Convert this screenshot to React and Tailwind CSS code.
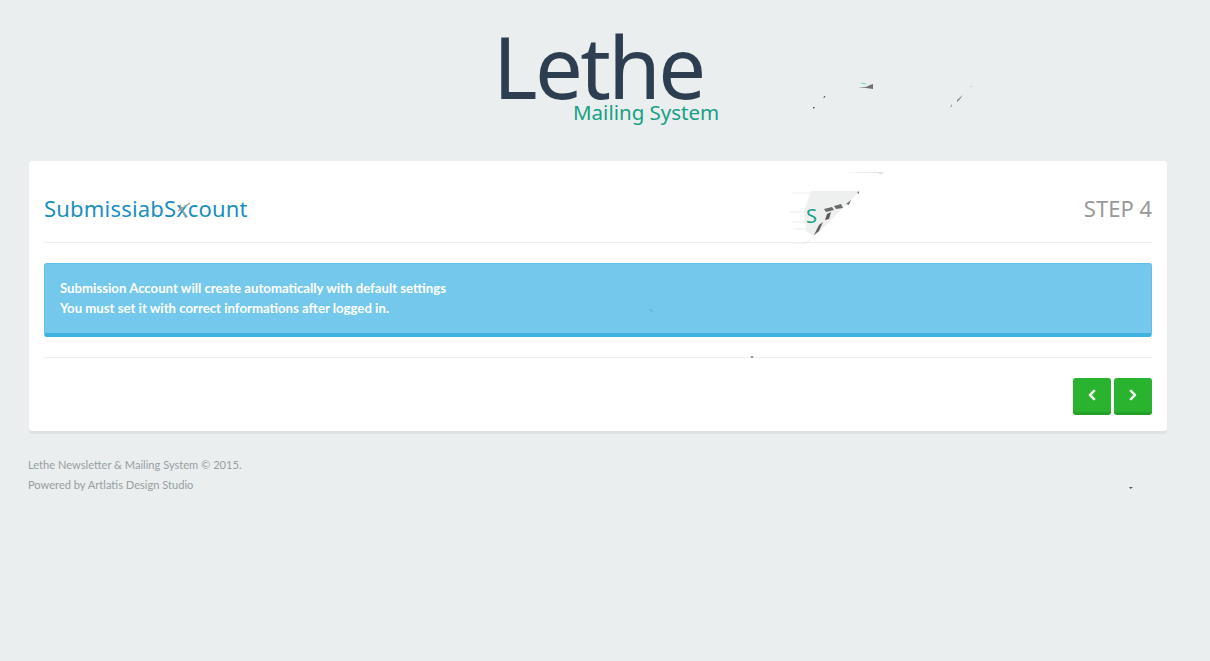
import { FaChevronLeft, FaChevronRight } from 'react-icons/fa';

const BODY_FONT = "font-['Lato','Noto_Sans',sans-serif]";
const HEAD_FONT = "font-['Noto_Sans',sans-serif]";

function Glitches() {
  return (
    <>
      <svg className="absolute left-0 top-0 pointer-events-none" width="1210" height="661" viewBox="0 0 1210 661" fill="none">
        <path d="M858 87 L866 87 L870 85 L873 84 L873 89 L866 88 Z" fill="#6f7273" />
        <path d="M861 83 L866 84" stroke="#7fd0c4" />
        <path d="M824 96 L825.5 96.5 L823.5 98.5 Z M813 107 L815 107 L813.5 109 Z" fill="#444444" />
        <path d="M957 100 L963 95 L960 99 L957 102 Z M950 108 L952 104 L952 106 Z" fill="#7c7f80" />
        <path d="M970 87 L972 86" stroke="#c9cccd" />
        <path d="M838 172 H878 L884 172 L881 175 L878 173 Z" fill="#e2e2e2" />
        <path d="M811 191 H858 L861 190 L826 225 L815 236 L806 232 L804 212 Z" fill="#eef0f0" />
        <path d="M792 193 H811 M790 212 H804 M792 222 H805 M795 229 H806 M792 243 H806 L809 240" stroke="#ececec" />
        <path d="M824 209 L832 207 L834 210 L826 212 Z M834 206 L841 204 L843 208 L836 209 Z" fill="#6b6b6b" />
        <path d="M827 214 L831 212 L829 219 L825 220 Z" fill="#5a5a5a" />
        <path d="M846 204 L851 200 L849 205 Z M857 193 L859 191 L859 194 Z" fill="#777777" />
        <path d="M814 235 L819 225 L823 222 L819 231 Z" fill="#5f5f5f" />
        <path d="M178 211 L190 203 M180 205 L186 218" stroke="#9aa5aa" strokeWidth="1.5" />
        <path d="M750 356.5 H754 L752 358 Z M1129 487 H1133 L1130.5 489 Z" fill="#555555" />
        <path d="M650 309.5 L652 311.5" stroke="#5a8ea8" />
      </svg>
      <span className={`absolute left-[806px] top-[202px] text-[20px] leading-[28px] text-[#16a085] ${HEAD_FONT}`}>S</span>
    </>
  );
}

export default function App() {
  return (
    <div className={`relative min-h-[661px] bg-[#eaeeef] ${BODY_FONT}`}>
      <div className="flex h-[161px] justify-center">
        <div className="relative mt-[16px] ml-[-18px] w-[206px] h-[110px]">
          <h1 className={`text-[85px] leading-[100px] tracking-[-2.6px] text-[#2c3e50] ${HEAD_FONT}`}>Lethe</h1>
          <span className={`absolute left-[80px] top-[83px] whitespace-nowrap text-[20.5px] leading-[26px] text-[#16a085] ${HEAD_FONT}`}>Mailing System</span>
        </div>
      </div>

      <div className="ml-[29px] w-[1138px] rounded-[3px] bg-white px-[15px] pb-[16px] shadow-[0_3px_0_#e0e1e1]">
        <div className="flex h-[82px] items-end justify-between border-b border-[#eeeeee] pb-[18px]">
          <h2 className={`mb-[1px] text-[22px] leading-[30px] tracking-[0.2px] text-[#1a8fc0] ${HEAD_FONT}`}>SubmissiabSxcount</h2>
          <span className={`mb-[1px] text-[22px] leading-[30px] text-[#999999] ${HEAD_FONT}`}>STEP 4</span>
        </div>

        <div className="mt-[20px] rounded-[3px] border-l border-t border-r border-[#5fbfe8] border-b-[4px] border-b-[#3fb3e0] bg-[#73c8ec] px-[15px] pb-[15px] pt-[14px] text-[13.2px] font-bold leading-[20px] text-white">
          <p>Submission Account will create automatically with default settings</p>
          <p>You must set it with correct informations after logged in.</p>
        </div>

        <div className="mt-[20px] flex justify-end gap-[3px] border-t border-[#eeeeee] pt-[20px]">
          <button className="flex h-[37px] w-[38px] items-center justify-center rounded-[3px] border-b-[3px] border-[#22a027] bg-[#29b32e] text-white">
            <FaChevronLeft className="text-[12px] stroke-[30]" />
          </button>
          <button className="flex h-[37px] w-[38px] items-center justify-center rounded-[3px] border-b-[3px] border-[#22a027] bg-[#29b32e] text-white">
            <FaChevronRight className="text-[12px] stroke-[30]" />
          </button>
        </div>
      </div>

      <div className="ml-[28px] mt-[24px] text-[11.1px] leading-[20px] text-[#989ea1]">
        <p>Lethe Newsletter &amp; Mailing System © 2015.</p>
        <p>Powered by Artlatis Design Studio</p>
      </div>

      <Glitches />
    </div>
  );
}
